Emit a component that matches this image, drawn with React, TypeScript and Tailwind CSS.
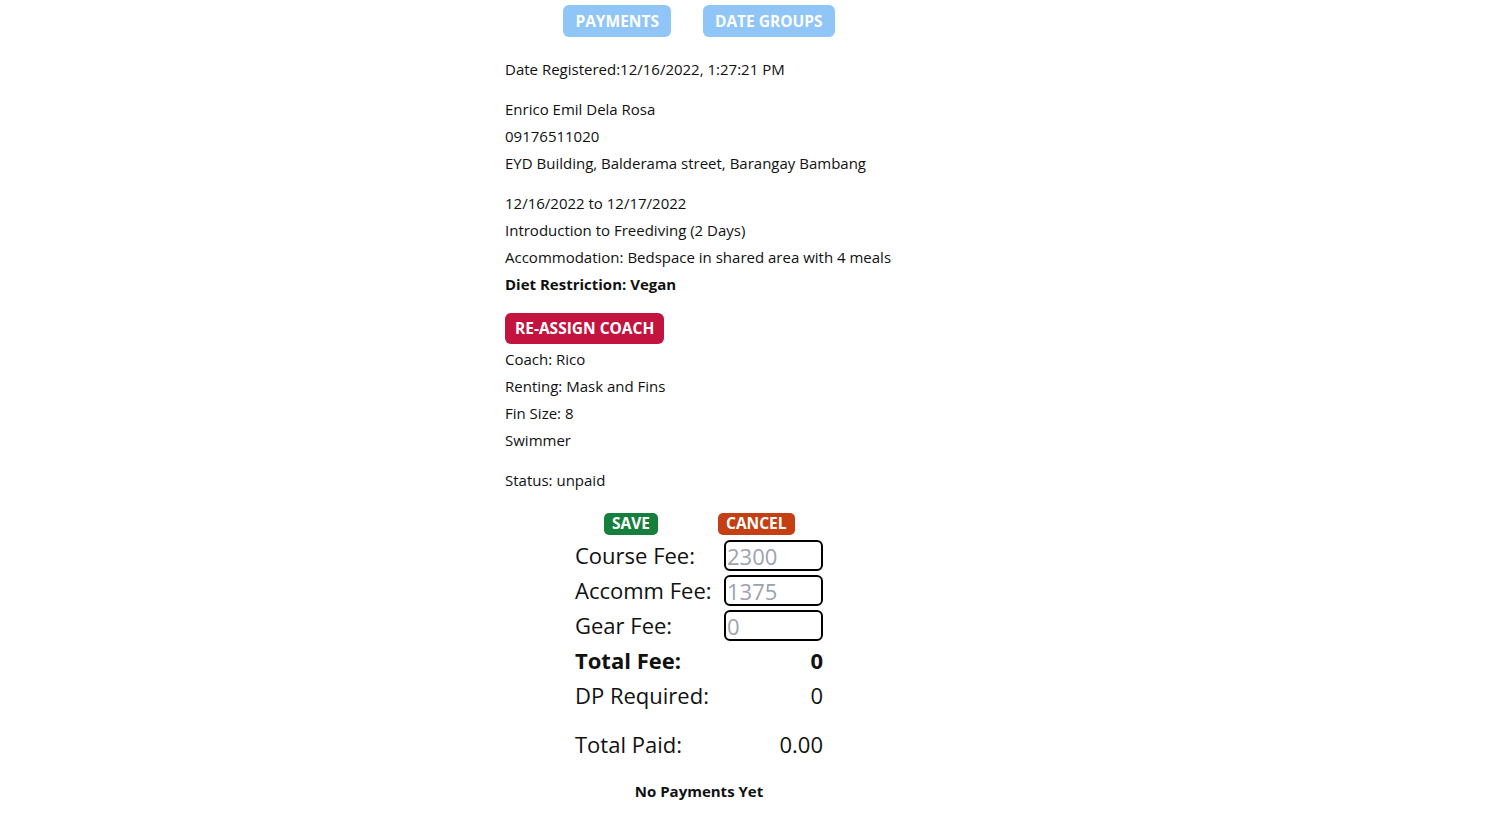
const font = { fontFamily: '"Open Sans", "Noto Sans", sans-serif' };

function FeeInput({ placeholder }: { placeholder: string }) {
  return (
    <input
      placeholder={placeholder}
      className="w-[99px] h-[31px] border-2 border-black rounded-[6px] px-[1px] text-[22px] leading-none outline-none placeholder:text-[#9ca3af]"
      style={font}
    />
  );
}

export default function App() {
  return (
    <div className="min-h-screen bg-white text-[#111] pb-4" style={font}>
      <div className="ml-[505px] w-[388px]">
        <div className="flex justify-center gap-[32px] pt-[5px]">
          <button className="h-[32px] px-[12px] pt-[2px] rounded-[6px] bg-[#90c5f8] text-white text-[15.5px] font-bold uppercase">
            Payments
          </button>
          <button className="h-[32px] px-[12px] pt-[2px] rounded-[6px] bg-[#90c5f8] text-white text-[15.5px] font-bold uppercase">
            Date Groups
          </button>
        </div>

        <div className="text-[15px] leading-[27px]">
          <p className="mt-[19px]">Date Registered:12/16/2022, 1:27:21 PM</p>

          <div className="mt-[13px]">
            <p>Enrico Emil Dela Rosa</p>
            <p>09176511020</p>
            <p>EYD Building, Balderama street, Barangay Bambang</p>
          </div>

          <div className="mt-[13px]">
            <p>12/16/2022 to 12/17/2022</p>
            <p>Introduction to Freediving (2 Days)</p>
            <p>Accommodation: Bedspace in shared area with 4 meals</p>
            <p className="font-bold">Diet Restriction: Vegan</p>
          </div>

          <button className="mt-[15px] h-[31px] px-[10px] rounded-[6px] bg-[#c2143f] text-white text-[15.5px] font-bold uppercase leading-none">
            Re-Assign Coach
          </button>

          <div className="mt-[2px]">
            <p>Coach: Rico</p>
            <p>Renting: Mask and Fins</p>
            <p>Fin Size: 8</p>
            <p>Swimmer</p>
          </div>

          <p className="mt-[13px]">Status: unpaid</p>
        </div>

        <div className="ml-[70px] w-[248px] mt-[19px]">
          <div className="flex">
            <button className="ml-[29px] h-[22px] px-[8px] rounded-[5px] bg-[#177f3d] text-white text-[15.5px] font-bold uppercase leading-none">
              Save
            </button>
            <button className="ml-[60px] h-[22px] px-[8px] rounded-[5px] bg-[#c43f12] text-white text-[15.5px] font-bold uppercase leading-none">
              Cancel
            </button>
          </div>

          <div className="text-[22px] leading-[35px] mt-[3px]">
            <div className="flex items-center justify-between h-[35px]">
              <span>Course Fee:</span>
              <FeeInput placeholder="2300" />
            </div>
            <div className="flex items-center justify-between h-[35px]">
              <span>Accomm Fee:</span>
              <FeeInput placeholder="1375" />
            </div>
            <div className="flex items-center justify-between h-[35px]">
              <span>Gear Fee:</span>
              <FeeInput placeholder="0" />
            </div>
            <div className="flex items-center justify-between h-[35px] font-bold">
              <span>Total Fee:</span>
              <span>0</span>
            </div>
            <div className="flex items-center justify-between h-[35px]">
              <span>DP Required:</span>
              <span>0</span>
            </div>
            <div className="flex items-center justify-between h-[35px] mt-[14px]">
              <span>Total Paid:</span>
              <span>0.00</span>
            </div>
          </div>

          <p className="mt-[18px] text-center text-[15px] font-bold">No Payments Yet</p>
        </div>
      </div>
    </div>
  );
}
